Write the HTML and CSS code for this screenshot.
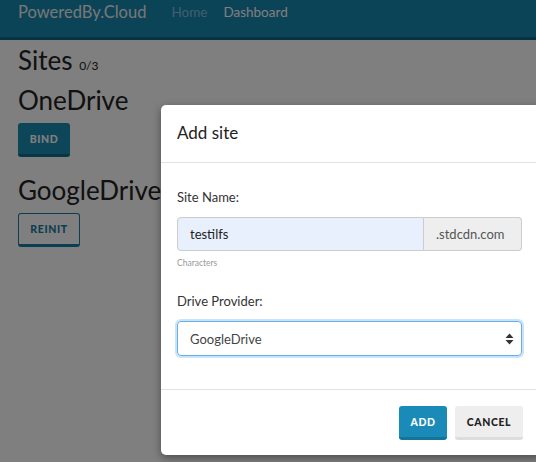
FILE: index.html
```html
<!DOCTYPE html>
<html>
<head>
<meta charset="utf-8">
<link rel="stylesheet" href="styles.css">
</head>
<body>
<nav class="navbar">
  <span class="brand">PoweredBy.Cloud</span>
  <a class="nav-link home">Home</a>
  <a class="nav-link">Dashboard</a>
</nav>
<main class="page">
  <h1 class="title">Sites <small>0/3</small></h1>
  <h2 class="drive">OneDrive</h2>
  <button class="btn btn-fill">BIND</button>
  <h2 class="drive">GoogleDrive</h2>
  <button class="btn btn-outline">REINIT</button>
</main>
<div class="backdrop"></div>
<div class="modal">
  <div class="modal-header">Add site</div>
  <div class="modal-body">
    <label class="label">Site Name:</label>
    <div class="input-group">
      <div class="input">testilfs</div>
      <div class="addon">.stdcdn.com</div>
    </div>
    <div class="hint">Characters</div>
    <label class="label label2">Drive Provider:</label>
    <div class="select">
      <span>GoogleDrive</span>
      <svg class="arrows" width="9" height="12" viewBox="0 0 9 12"><path d="M0.5 5L4.5 0.5L8.5 5Z M0.5 7L4.5 11.5L8.5 7Z" fill="#333"/></svg>
    </div>
  </div>
  <div class="modal-footer">
    <button class="btn btn-add">ADD</button>
    <button class="btn btn-cancel">CANCEL</button>
  </div>
</div>
</body>
</html>
```
FILE: styles.css
```css
* { box-sizing: border-box; }
html, body { margin: 0; padding: 0; }
body {
  width: 536px;
  height: 462px;
  overflow: hidden;
  background: #fff;
  font-family: Lato, "Noto Sans", sans-serif;
  color: #222;
  position: relative;
}
.navbar {
  height: 40px;
  background: #1686ae;
  border-bottom: 3px solid #0c6489;
  display: flex;
  align-items: flex-start;
  padding: 1px 18px 0;
}
.brand {
  font-size: 16.5px;
  line-height: 22px;
  color: #f0f0f0;
  margin-right: 25px;
}
.nav-link {
  font-size: 13.5px;
  line-height: 22px;
  color: #fff;
  margin-right: 16px;
}
.nav-link.home { color: #80c0e0; }
.page {
  padding: 5px 18px;
}
.title {
  font-weight: 400;
  font-size: 26px;
  margin: 0 0 4px;
  line-height: 30px;
}
.title small { font-size: 12px; }
.drive {
  font-weight: 400;
  font-size: 26px;
  margin: 0 0 8px;
  line-height: 30px;
}
.btn {
  display: block;
  font-family: Lato, "Noto Sans", sans-serif;
  font-weight: 900;
  font-size: 10.5px;
  letter-spacing: 0.6px;
  border-radius: 3px;
  cursor: pointer;
  padding: 0;
}
.btn-fill {
  background: #1a8bb2;
  color: #fff;
  border: none;
  border-bottom: 3px solid #0e6d92;
  width: 52px;
  height: 34px;
  margin: 0 0 18px;
}
.btn-outline {
  background: #fff;
  color: #1a7aa3;
  border: 1px solid #1a7aa3;
  border-bottom: 3px solid #1a7aa3;
  width: 62px;
  height: 34px;
  margin-top: 0;
}
.backdrop {
  position: absolute;
  inset: 0;
  background: rgba(0,0,0,0.5);
}
.modal {
  position: absolute;
  left: 161px;
  top: 105px;
  width: 380px;
  height: 350px;
  background: #fff;
  border-radius: 5px 0 0 5px;
  box-shadow: 0 3px 9px rgba(0,0,0,0.4);
}
.modal-header {
  height: 58px;
  padding: 17px 16px;
  font-size: 17px;
  color: #222;
  border-bottom: 1px solid #e3e3e3;
}
.modal-body {
  padding: 25px 16px 33px;
  display: flex;
  flex-direction: column;
}
.label {
  font-size: 13px;
  color: #333;
  line-height: 18px;
}
.label2 { margin-top: 24px; }
.input-group {
  display: flex;
  margin-top: 11px;
  width: 345px;
  height: 34px;
}
.input {
  flex: 1;
  background: #e8f0fe;
  border: 1px solid #ccc;
  border-radius: 4px 0 0 4px;
  font-size: 13px;
  padding: 8px 12px;
  color: #222;
}
.addon {
  width: 98px;
  background: #eee;
  border: 1px solid #ccc;
  border-left: none;
  border-radius: 0 4px 4px 0;
  font-size: 13px;
  padding: 8px 0 0 12px;
  color: #555;
}
.hint {
  font-size: 8.5px;
  color: #999;
  margin-top: 7px;
}
.select {
  margin-top: 11px;
  width: 345px;
  height: 35px;
  border: 1px solid #66afe9;
  border-radius: 4px;
  box-shadow: 0 0 0 2px rgba(102,175,233,0.35);
  display: flex;
  align-items: center;
  justify-content: space-between;
  padding: 0 7px 0 12px;
  font-size: 13px;
  color: #444;
}
.modal-footer {
  border-top: 1px solid #e3e3e3;
  display: flex;
  justify-content: flex-end;
  padding: 16px 18px 16px 14px;
  gap: 8px;
}
.btn-add {
  background: #1a8bb9;
  color: #fff;
  border: none;
  border-bottom: 3px solid #157599;
  width: 48px;
  height: 34px;
  font-size: 10.5px;
}
.btn-cancel {
  background: #eee;
  color: #222;
  border: none;
  border-bottom: 3px solid #ddd;
  width: 68px;
  height: 34px;
  font-size: 10.5px;
}
```
